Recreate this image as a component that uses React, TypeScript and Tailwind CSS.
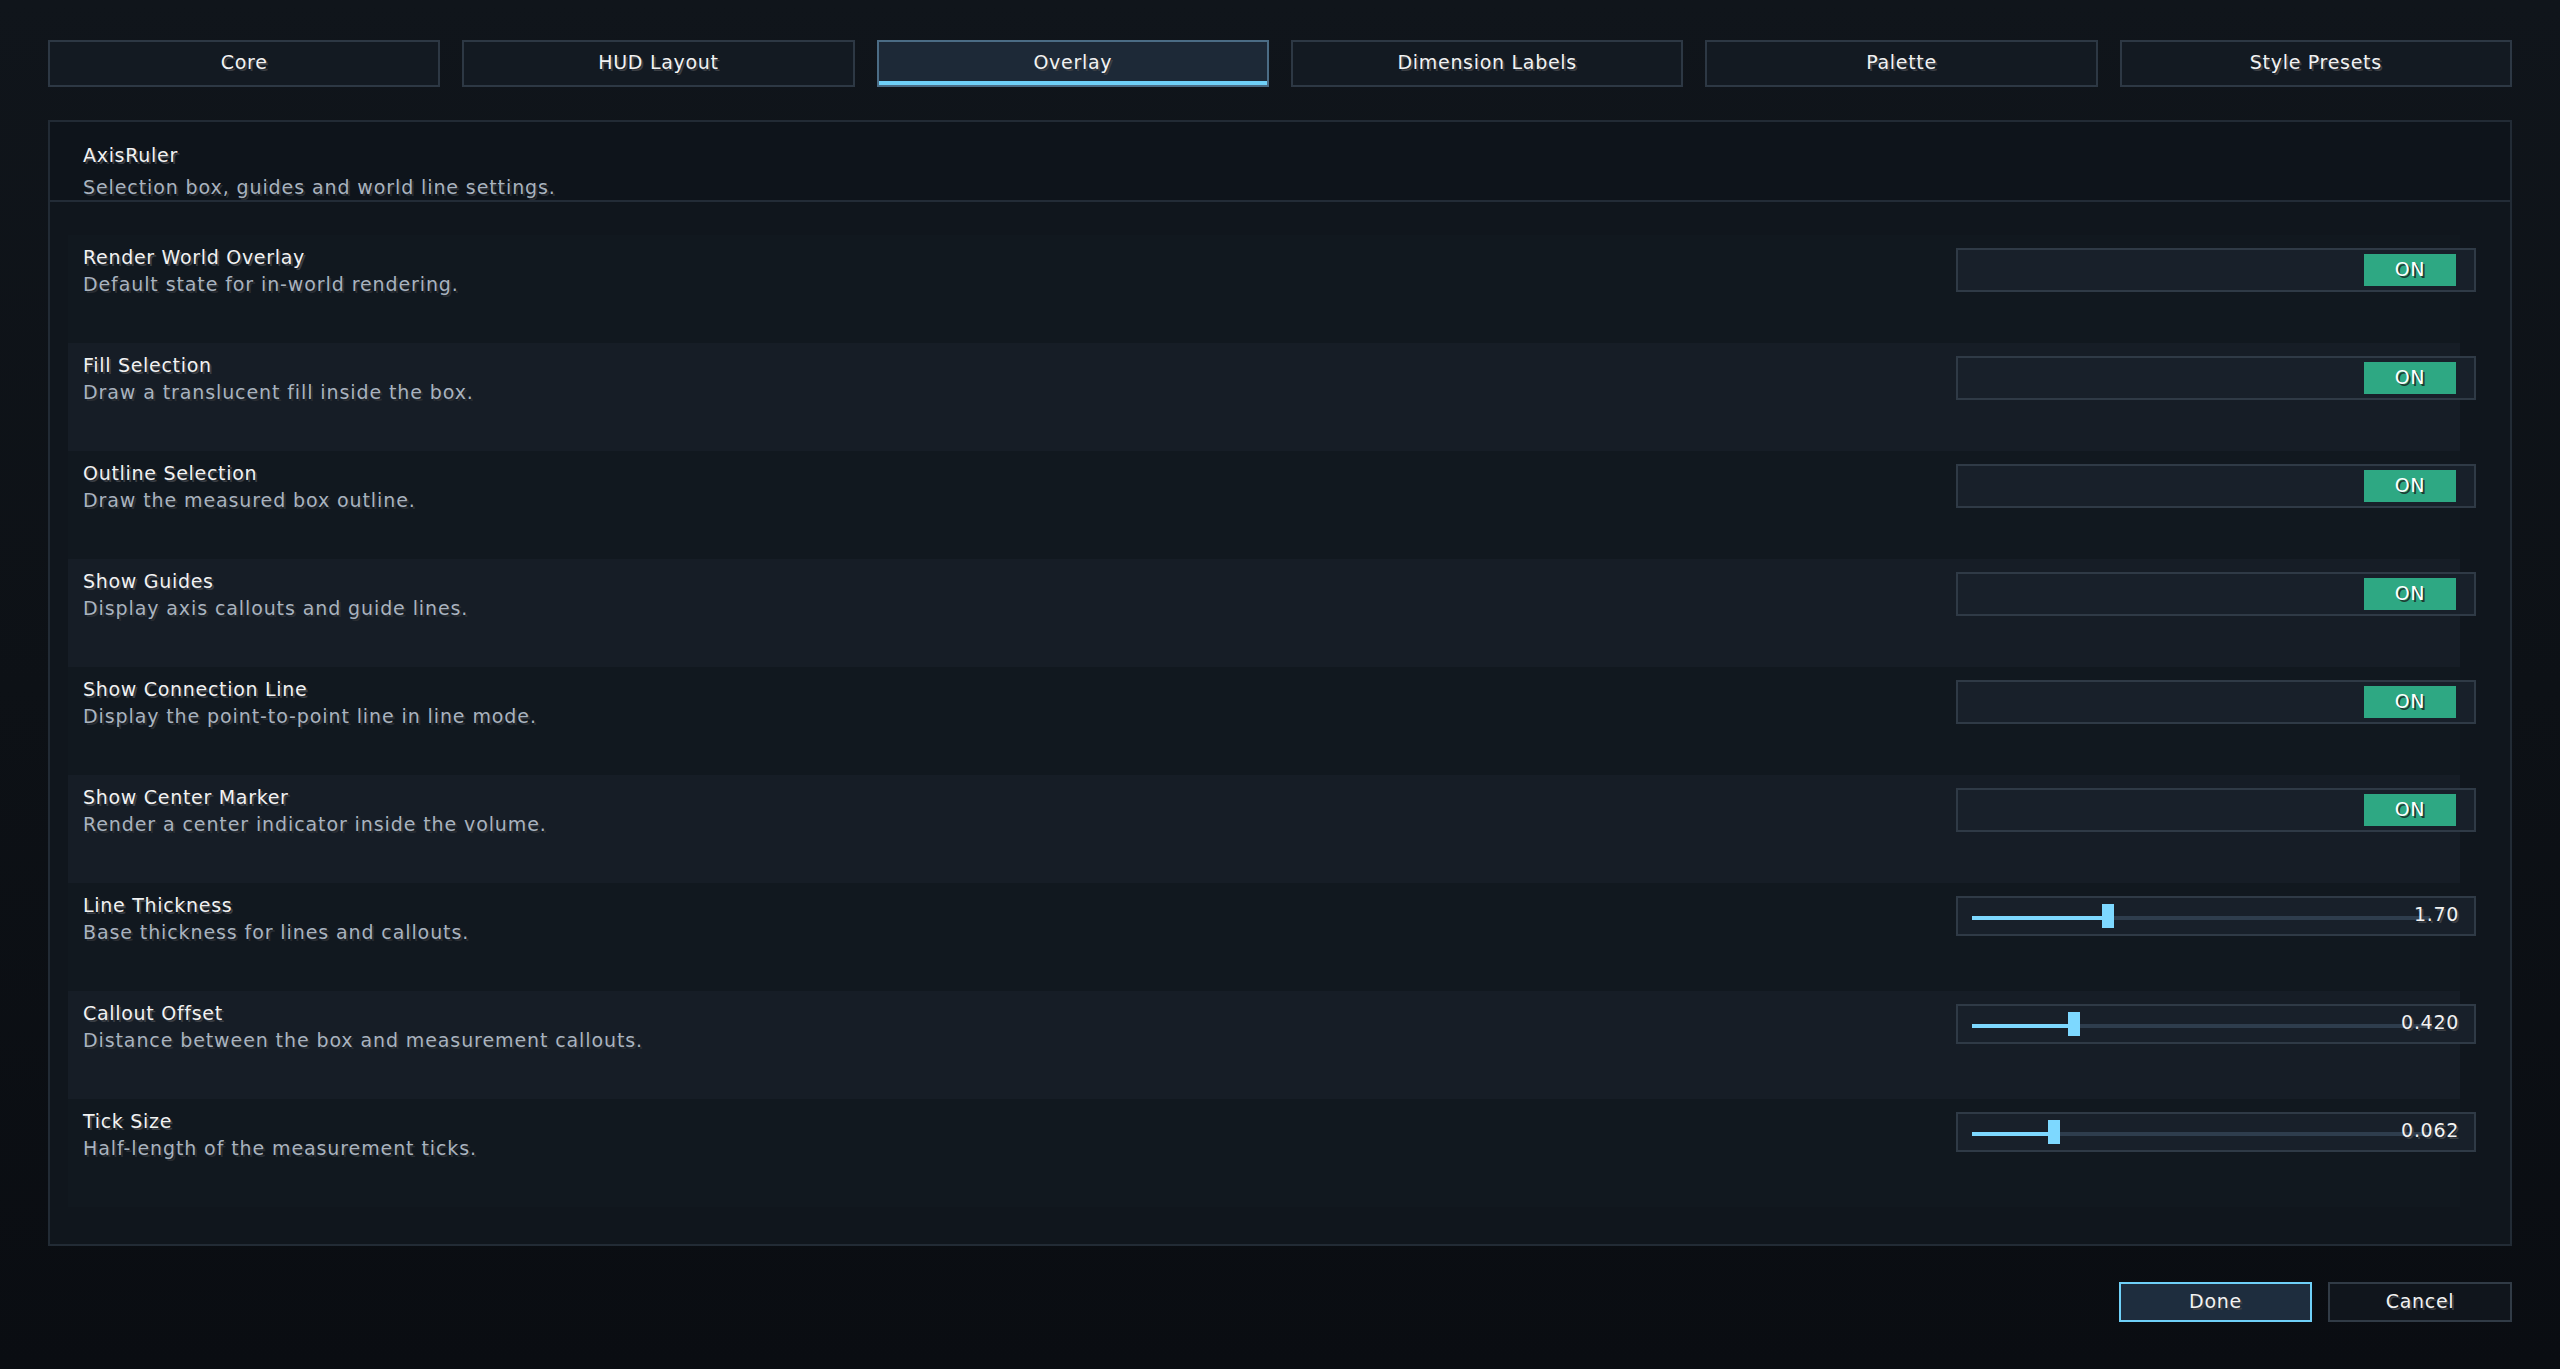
import React, { useState } from 'react';

type Tab = 'Core' | 'HUD Layout' | 'Overlay' | 'Dimension Labels' | 'Palette' | 'Style Presets';

interface ToggleSetting {
  kind: 'toggle';
  title: string;
  description: string;
  value: boolean;
}

interface SliderSetting {
  kind: 'slider';
  title: string;
  description: string;
  value: string;
  fraction: number;
}

type Setting = ToggleSetting | SliderSetting;

const tabs: Tab[] = ['Core', 'HUD Layout', 'Overlay', 'Dimension Labels', 'Palette', 'Style Presets'];

const settings: Setting[] = [
  { kind: 'toggle', title: 'Render World Overlay', description: 'Default state for in-world rendering.', value: true },
  { kind: 'toggle', title: 'Fill Selection', description: 'Draw a translucent fill inside the box.', value: true },
  { kind: 'toggle', title: 'Outline Selection', description: 'Draw the measured box outline.', value: true },
  { kind: 'toggle', title: 'Show Guides', description: 'Display axis callouts and guide lines.', value: true },
  { kind: 'toggle', title: 'Show Connection Line', description: 'Display the point-to-point line in line mode.', value: true },
  { kind: 'toggle', title: 'Show Center Marker', description: 'Render a center indicator inside the volume.', value: true },
  { kind: 'slider', title: 'Line Thickness', description: 'Base thickness for lines and callouts.', value: '1.70', fraction: 0.297 },
  { kind: 'slider', title: 'Callout Offset', description: 'Distance between the box and measurement callouts.', value: '0.420', fraction: 0.223 },
  { kind: 'slider', title: 'Tick Size', description: 'Half-length of the measurement ticks.', value: '0.062', fraction: 0.179 },
];

// game-style text: light with a hard 2px drop shadow
const textMain = 'text-[#f2f2f2] tracking-[0.7px] [text-shadow:2px_2px_0_#3b3f45]';
const textDim = 'text-[#a9b3bf] tracking-[0.9px] [text-shadow:2px_2px_0_#292d33]';

function Toggle({ on }: { on: boolean }) {
  return (
    <div className="w-[520px] h-[44px] -mr-[16px] mt-[13px] border-2 border-[#2f3a46] bg-[#18202a] flex items-center justify-end pr-[18px]">
      <div
        className={`w-[92px] h-[32px] pb-[2px] flex items-center justify-center text-[19px] leading-none tracking-[0.7px] ${
          on ? 'bg-[#2ea883]' : 'bg-[#3a4450]'
        } text-white [text-shadow:2px_2px_0_#1f3d33]`}
      >
        {on ? 'ON' : 'OFF'}
      </div>
    </div>
  );
}

function Slider({ value, fraction }: { value: string; fraction: number }) {
  const trackWidth = 458;
  const pos = Math.round(trackWidth * fraction);
  return (
    <div className="w-[520px] h-[40px] -mr-[16px] mt-[13px] border-2 border-[#2f3a46] bg-[#18202a] relative">
      <div className="absolute left-[14px] top-[18px] w-[458px] h-[4px] bg-[#2e3d4d]" />
      <div className="absolute left-[14px] top-[18px] h-[4px] bg-[#7dd8ff]" style={{ width: pos }} />
      <div className="absolute top-[6px] w-[12px] h-[24px] bg-[#7dd8ff]" style={{ left: 14 + pos - 6 }} />
      <div className={`absolute right-[15px] top-0 h-full pb-[3px] flex items-center text-[19px] ${textMain}`}>{value}</div>
    </div>
  );
}

export default function App() {
  const [activeTab, setActiveTab] = useState<Tab>('Overlay');

  return (
    <div
      className="min-h-screen w-full bg-gradient-to-b from-[#10151b] via-[#0d1116] to-[#0a0d12] px-[48px] pt-[40px]"
      style={{ fontFamily: '"DejaVu Sans", "Liberation Sans", sans-serif' }}
    >
      {/* tab strip */}
      <div className="grid grid-cols-6 gap-[22px]">
        {tabs.map(tab => {
          const active = tab === activeTab;
          return (
            <button
              key={tab}
              onClick={() => setActiveTab(tab)}
              className={`relative h-[47px] pb-[3px] border-2 text-[19px] ${textMain} ${
                active ? 'bg-[#1d2937] border-[#4b6c85]' : 'bg-[#131a22] border-[#2d3844]'
              }`}
            >
              {tab}
              {active && <span className="absolute left-0 right-0 bottom-0 h-[4px] bg-[#6fd0f8]" />}
            </button>
          );
        })}
      </div>

      {/* settings panel */}
      <div className="mt-[33px] h-[1126px] border-2 border-[#222b35] bg-[#10161d] flex flex-col">
        <div className="h-[80px] border-b-2 border-[#232c37] bg-[#0e141b] pl-[33px] pt-[21px]">
          <div className={`text-[19px] leading-[24px] ${textMain}`}>AxisRuler</div>
          <div className={`text-[19px] leading-[24px] mt-[8px] ${textDim}`}>Selection box, guides and world line settings.</div>
        </div>

        <div className="pl-[18px] pt-[33px]">
          {settings.map((s, i) => (
            <div
              key={s.title}
              className={`w-[2392px] h-[108px] flex justify-between items-start pl-[15px] ${
                i % 2 === 1 ? 'bg-[#161d26]' : 'bg-[#11181f]'
              }`}
            >
              <div className="pt-[10px]">
                <div className={`text-[19px] leading-[24px] ${textMain}`}>{s.title}</div>
                <div className={`text-[19px] leading-[24px] mt-[3px] ${textDim}`}>{s.description}</div>
              </div>
              {s.kind === 'toggle' ? <Toggle on={s.value} /> : <Slider value={s.value} fraction={s.fraction} />}
            </div>
          ))}
        </div>
      </div>

      {/* footer actions */}
      <div className="mt-[36px] flex justify-end gap-[16px]">
        <button className={`w-[193px] h-[40px] pb-[2px] border-2 border-[#6fd0f8] bg-[#1e2d3e] text-[19px] ${textMain}`}>Done</button>
        <button className={`w-[184px] h-[40px] pb-[2px] border-2 border-[#313b46] bg-[#10151c] text-[19px] ${textMain}`}>Cancel</button>
      </div>
    </div>
  );
}
